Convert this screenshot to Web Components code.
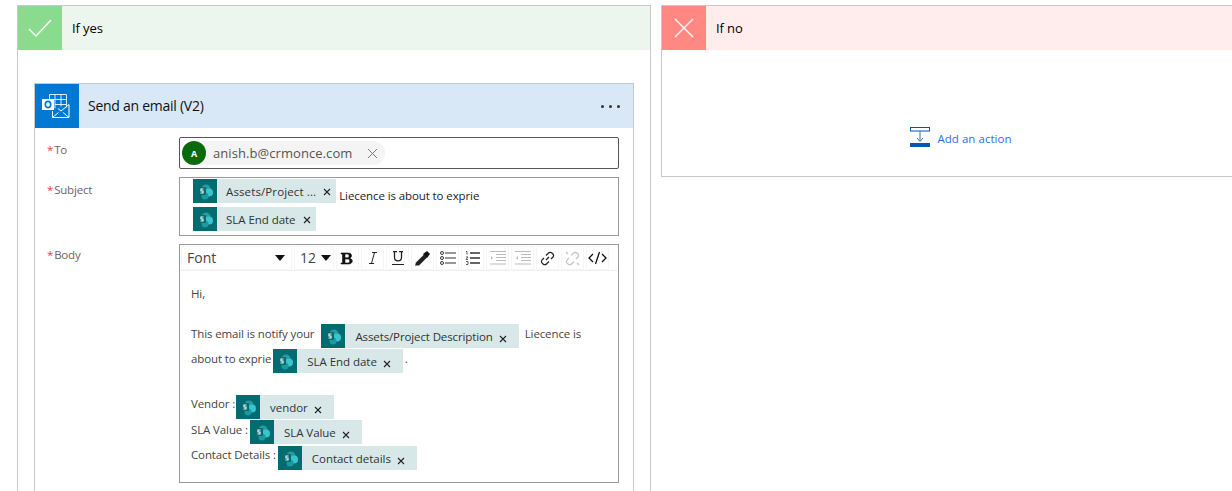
<!DOCTYPE html>
<html>
<head>
<meta charset="utf-8">
<title>Condition branches</title>
<style>
  html, body { margin: 0; height: 491px; overflow: hidden; background: #fff; }
  body { font: 12px "Open Sans", "Noto Sans", sans-serif; color: #333; }
</style>
</head>
<body>
<template id="tmpl-flow-canvas">
  <style>
  :host {
    display: flex;
    flex-flow: row nowrap;
    align-items: flex-start;
    gap: 10px;
    padding: 5px 0 0 17px;
    box-sizing: border-box;
    width: 1232px;
    height: 491px;
    overflow: hidden;
  }
  </style>
  <slot></slot>
</template>
<template id="tmpl-flow-branch">
  <style>
  :host {
    display: block;
    box-sizing: border-box;
    flex: none;
    border: 1px solid #c8c8c8;
    background: #fff;
    color: #000;
  }
  :host([kind="yes"]) { width: 634px; height: 486px; border-bottom: 0; --icon: #8bdb8f; --head: #ecf6ee; }
  :host([kind="no"]) { width: 571px; height: 172px; border-right: 0; --icon: #ff8883; --head: #ffecec; }
  .head { display: flex; height: 44px; align-items: center; background: var(--head); }
  .icon { width: 44px; height: 44px; background: var(--icon); display: flex; align-items: center; justify-content: center; }
  .title { margin-left: 10px; font-size: 13px; letter-spacing: -.1px; }
  .body { display: block; }
  svg { display: block; }
  </style>
  <div class="head">
    <div class="icon"><slot name="icon"></slot></div>
    <div class="title"></div>
  </div>
  <div class="body"><slot></slot></div>
</template>
<template id="tmpl-action-card">
  <style>
  :host {
    display: block;
    box-sizing: border-box;
    width: 600px;
    margin: 33px 0 0 16px;
    border: 1px solid #c8c8c8;
    border-bottom: 0;
    height: 408px;
  }
  .head { display: flex; align-items: center; height: 44px; background: #d8e8f7; color: #111; }
  .icon { width: 44px; height: 44px; background: #0078d4; display: flex; align-items: center; justify-content: center; }
  .title { margin-left: 9px; padding-bottom: 2px; font-size: 14px; letter-spacing: -.26px; flex: 1; }
  .more { display: flex; gap: 5px; margin-right: 13px; }
  .more i { width: 3px; height: 3px; border-radius: 50%; background: #333; }
  .fields { display: flex; flex-flow: column; gap: 8px; padding-top: 9px; }
  </style>
  <div class="head">
    <div class="icon">
      <svg width="30" height="30" viewBox="0 0 30 30" fill="none" stroke="#fff" stroke-width="1">
        <path d="M7.500 3.500h17v13M7.500 3.500v5M13 3.500v14M19 3.500v12M7.500 8.500h17M13 13.500h11" opacity=".85"/>
        <rect x="0" y="8" width="12" height="11" fill="#fff" stroke="none"/>
        <ellipse cx="6" cy="13.500" rx="2.700" ry="3.100" stroke="#0078d4" stroke-width="1.700"/>
        <path d="M10.500 20v6.500h16.500v-13l-8 6.500-3-2.500M10.500 26.500l6-5M27 26.500l-6-5"/>
      </svg>
    </div>
    <div class="title"></div>
    <div class="more"><i></i><i></i><i></i></div>
  </div>
  <div class="fields"><slot></slot></div>
</template>
<template id="tmpl-form-field">
  <style>
  :host { display: flex; align-items: flex-start; padding-left: 12px; }
  .label { width: 132px; flex: none; padding-top: 5px; color: #666; font-size: 11.500px; letter-spacing: -.2px; line-height: 16px; }
  :host([name="Body"]) .label { padding-top: 3px; }
  .label b { color: #e8384f; font-weight: 400; margin-right: 1px; }
  .box { box-sizing: border-box; width: 440px; flex: none; border: 1px solid #999; }
  :host([active]) .box { border-color: #555; border-radius: 2px; }
  </style>
  <div class="label"><b>*</b><span class="name"></span></div>
  <div class="box"><slot></slot></div>
</template>
<template id="tmpl-person-chip">
  <style>
  :host { display: flex; align-items: center; width: max-content; height: 24px; margin: 3px 0 3px 2px; padding-right: 7px; border-radius: 12px; background: #f4f4f4; color: #555; font-size: 13px; letter-spacing: .07px; }
  .avatar { width: 24px; height: 24px; border-radius: 50%; background: #0b6a0b; color: #fff; font-size: 9px; font-weight: 700; display: flex; align-items: center; justify-content: center; margin-right: 7px; letter-spacing: 0; }
  svg { margin-left: 15px; }
  </style>
  <div class="avatar">A</div><slot></slot>
  <svg width="11" height="11" viewBox="0 0 11 11" stroke="#777" fill="none"><path d="M1 1l9 9M10 1l-9 9"/></svg>
</template>
<template id="tmpl-flow-token">
  <style>
  :host { display: inline-flex; align-items: center; flex: none; height: 24px; background: #d8e8e8; color: #333; font-size: 11.500px; line-height: 16px; letter-spacing: var(--token-ls, -.04px); white-space: nowrap; }
  .logo { width: 24px; height: 24px; flex: none; display: block; }
  .text { padding-left: var(--pad, 9px); padding-top: var(--text-top, 1px); }
  .x { margin: var(--x-top, 2px) var(--x-right, 5px) 0 var(--x-left, 7px); flex: none; display: block; }
  </style>
  <svg class="logo" viewBox="0 0 24 24">
    <rect width="24" height="24" fill="#036c70"/>
    <circle cx="13" cy="10" r="4.500" fill="#2a9a9e"/>
    <circle cx="16" cy="13.500" r="4" fill="#37c6d0"/>
    <circle cx="12" cy="17" r="3.500" fill="#1a9ba1"/>
    <rect x="5" y="8" width="8" height="8" rx="1" fill="#0b6a6e"/>
    <path d="M10.500 10h-2.500v2h2v2h-2.500" fill="none" stroke="#e8f6f6" stroke-width="1.200"/>
  </svg>
  <span class="text"><slot></slot></span>
  <svg class="x" width="8" height="8" viewBox="0 0 8 8" stroke="#222" stroke-width="1.100" fill="none"><path d="M1 1l6 6M7 1l-6 6"/></svg>
</template>
<template id="tmpl-editor-toolbar">
  <style>
  :host { display: flex; align-items: stretch; height: 24px; padding: 1px 1px 0 1px; gap: 2px; border-bottom: 1px solid #f0f0f0; font-size: 14px; color: #444; }
  .sel { display: flex; align-items: center; justify-content: space-between; box-sizing: border-box; background: #fff; box-shadow: 0 0 0 1px #f6f6f6 inset; padding: 0 7px 0 6px; }
  .sel span { padding-bottom: 2px; }
  .font { width: 111px; }
  .size { width: 40px; padding-right: 3px; padding-left: 6px; }
  .tri { width: 0; height: 0; border: 5px solid transparent; border-top: 6px solid #111; border-bottom: 0; }
  </style>
  <div class="sel font"><span>Font</span><i class="tri"></i></div>
  <div class="sel size"><span>12</span><i class="tri"></i></div>
  <slot></slot>
</template>
<template id="tmpl-tool-button">
  <style>
  :host { display: flex; width: 23px; flex: none; align-items: center; justify-content: center; box-shadow: 0 0 0 1px #f6f6f6 inset; }
  svg { display: block; }
  </style>
  <slot></slot>
</template>
<template id="tmpl-body-line">
  <style>
  :host { display: flex; align-items: flex-start; min-height: 24px; margin-left: 11px; white-space: nowrap; font-size: 11.500px; line-height: 16px; letter-spacing: -.12px; color: #444; --pad: 10px; --x-left: 6px; --x-right: 12px; --x-top: 5px; }
  </style>
  <slot></slot>
</template>
<template id="tmpl-add-action">
  <style>
  :host { display: flex; align-items: center; justify-content: center; gap: 7px; margin-top: 77px; padding-left: 28px; color: #2f6fe8; font-size: 11.500px; letter-spacing: .03px; }
  svg { display: block; }
  span { padding-top: 2px; }
  </style>
  <svg width="20" height="20" viewBox="0 0 20 20" fill="none">
    <rect x=".5" y=".5" width="19" height="3.500" stroke="#0057b0"/>
    <path d="M10 4v10M7 11l3 3.500 3-3.500" stroke="#3a78b8"/>
    <rect y="16" width="20" height="4" fill="#0057b0"/>
  </svg>
  <span><slot></slot></span>
</template>

<flow-canvas>
  <flow-branch kind="yes" title="If yes">
    <svg slot="icon" width="24" height="18" viewBox="0 0 24 18" fill="none" stroke="#fff" stroke-width="1.300"><path d="M1 10l7 7L23 1"/></svg>
    <action-card title="Send an email (V2)">
      <form-field name="To" active>
        <person-chip>anish.b@crmonce.com</person-chip>
      </form-field>
      <form-field name="Subject">
        <div style="display:flex;flex-flow:row wrap;align-items:flex-start;gap:4px 3px;padding:1px 0 4px 13px;font-size:11.500px;letter-spacing:-.1px;color:#222;line-height:16px">
          <flow-token style="--token-ls:.12px">Assets/Project ...</flow-token><span style="padding-top:9px;height:15px">Liecence is about to exprie</span>
          <flow-token style="margin-right:200px">SLA End date</flow-token>
        </div>
      </form-field>
      <form-field name="Body">
        <editor-toolbar>
          <tool-button><svg width="15" height="13" viewBox="0 0 15 13"><path d="M1 1h7.500c4 0 4 5 .5 5.300 4.500.2 4.500 5.700-.5 5.700H1v-1h1.500V2H1zM5 2v3.800h2.500c2 0 2-3.800 0-3.800zM5 7v4h3c2.300 0 2.300-4 0-4z" fill="#111" stroke="#111" stroke-width=".6"/></svg></tool-button>
          <tool-button><svg width="10" height="12" viewBox="0 0 10 12" fill="none" stroke="#222"><path d="M4 .5h5M1 11.500h5M6.500 .5l-3 11"/></svg></tool-button>
          <tool-button><svg width="12" height="14" viewBox="0 0 12 14" fill="none" stroke="#222"><path d="M1 .5h4M7 .5h4M2.500 .5v6c0 4.500 7 4.500 7 0v-6" stroke-width="1.300"/><path d="M0 13.500h12"/></svg></tool-button>
          <tool-button><svg width="15" height="15" viewBox="0 0 15 15"><path d="M0 14.500h4l8-8-3-3-8 8z" fill="#222"/><path d="M8 3l4-3 3 3-3 4z" fill="#111"/></svg></tool-button>
          <tool-button><svg width="16" height="14" viewBox="0 0 16 14" fill="none" stroke="#333"><circle cx="2" cy="2" r="1.500"/><circle cx="2" cy="7" r="1.500"/><circle cx="2" cy="12" r="1.500"/><path d="M5 2h11M5 7h11M5 12h11" stroke-width="1.200"/></svg></tool-button>
          <tool-button><svg width="15" height="14" viewBox="0 0 15 14" fill="none" stroke="#333"><path d="M1 .5h1v3M1 6h2l-2 2.500h2M1 10.500h2v3H1" stroke-width=".8"/><path d="M5 2h10M5 7h10M5 12h10" stroke-width="1.300"/></svg></tool-button>
          <tool-button><svg width="16" height="14" viewBox="0 0 16 14" fill="none" stroke="#bbb"><path d="M0 .5h16M6 3.500h10M6 6.500h10M6 9.500h10M0 13h16" stroke-width="1.200"/><path d="M1 5l2 2-2 2z" fill="#bbb" stroke="none"/></svg></tool-button>
          <tool-button><svg width="16" height="14" viewBox="0 0 16 14" fill="none" stroke="#bbb"><path d="M0 .5h16M6 3.500h10M6 6.500h10M6 9.500h10M0 13h16" stroke-width="1.200"/><path d="M3 5L1 7l2 2z" fill="#bbb" stroke="none"/></svg></tool-button>
          <tool-button><svg width="15" height="15" viewBox="0 0 15 15" fill="none" stroke="#222" stroke-width="1.200"><path d="M6 9l3-3M6 4.500L8.500 2c2-2 6.500 1.500 4.500 4L11 8M9 10.500L6.500 13c-2 2-6.500-1.500-4.500-4l2-2"/></svg></tool-button>
          <tool-button><svg width="15" height="15" viewBox="0 0 15 15" fill="none" stroke="#c4c4c4" stroke-width="1.200"><path d="M6 4.500L8.500 2c2-2 6.500 1.500 4.500 4L11 8M9 10.500L6.500 13c-2 2-6.500-1.500-4.500-4l2-2M1 1l2 2M12 12l2 2"/></svg></tool-button>
          <tool-button><svg width="19" height="14" viewBox="0 0 19 14" fill="none" stroke="#111" stroke-width="1.300"><path d="M5 3L1 7l4 4M14 3l4 4-4 4M11.500 1L7.500 13"/></svg></tool-button>
        </editor-toolbar>
        <div style="display:flex;flex-flow:column;height:211px;padding-top:15px;box-sizing:border-box">
          <body-line style="height:38px">Hi,</body-line>
          <body-line style="height:25px"><span style="margin-right:7px;padding-top:2px">This email is notify your</span><flow-token style="--token-ls:-.12px">Assets/Project Description</flow-token><span style="margin-left:6px;padding-top:2px">Liecence is</span></body-line>
          <body-line style="height:46px"><span style="padding-top:2px;margin-right:2px">about to exprie</span><flow-token>SLA End date</flow-token><span style="margin-left:2px;padding-top:2px">.</span></body-line>
          <body-line style="height:25px"><span style="margin-right:1px;padding-top:1px">Vendor :</span><flow-token>vendor</flow-token></body-line>
          <body-line style="height:26px"><span style="margin-right:2px;padding-top:2px">SLA Value :</span><flow-token>SLA Value</flow-token></body-line>
          <body-line><span style="margin-right:2px;padding-top:1px">Contact Details :</span><flow-token>Contact details</flow-token></body-line>
        </div>
      </form-field>
    </action-card>
  </flow-branch>
  <flow-branch kind="no" title="If no">
    <svg slot="icon" width="20" height="20" viewBox="0 0 20 20" fill="none" stroke="#fff" stroke-width="1.200"><path d="M1 1l18 18M19 1L1 19"/></svg>
    <add-action>Add an action</add-action>
  </flow-branch>
</flow-canvas>

<script>
function shadowFrom(el, id) {
  const root = el.attachShadow({ mode: 'open' });
  root.append(document.getElementById(id).content.cloneNode(true));
  return root;
}
class TitledElement extends HTMLElement {
  constructor(id) {
    super();
    this.root = shadowFrom(this, id);
  }
  connectedCallback() {
    const t = this.root.querySelector('.title');
    if (t) t.textContent = this.getAttribute('title');
    this.removeAttribute('title');
  }
}
customElements.define('flow-canvas', class extends HTMLElement {
  constructor() { super(); shadowFrom(this, 'tmpl-flow-canvas'); }
});
customElements.define('flow-branch', class extends TitledElement {
  constructor() { super('tmpl-flow-branch'); }
});
customElements.define('action-card', class extends TitledElement {
  constructor() { super('tmpl-action-card'); }
});
customElements.define('form-field', class extends HTMLElement {
  constructor() { super(); this.root = shadowFrom(this, 'tmpl-form-field'); }
  connectedCallback() {
    this.root.querySelector('.name').textContent = this.getAttribute('name');
  }
});
['person-chip', 'flow-token', 'editor-toolbar', 'tool-button', 'body-line', 'add-action'].forEach(name => {
  customElements.define(name, class extends HTMLElement {
    constructor() { super(); shadowFrom(this, 'tmpl-' + name); }
  });
});
</script>
</body>
</html>
